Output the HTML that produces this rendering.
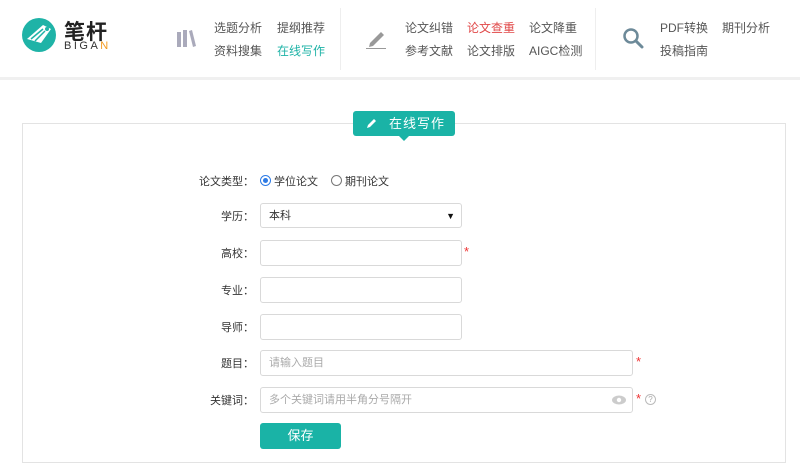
<!DOCTYPE html>
<html><head><meta charset="utf-8"><style>
*{margin:0;padding:0;box-sizing:border-box}
body{width:800px;height:451px;overflow:hidden;background:#fff;font-family:"Liberation Sans","Noto Sans CJK SC",sans-serif;font-size:12px;color:#333;position:relative}
.a{position:absolute}
.hd{position:absolute;left:0;top:0;width:800px;height:77px;background:#fff}
.band{position:absolute;left:0;top:77px;width:800px;height:3px;background:#f0f0f0}
.nav{position:absolute;font-size:12px;color:#555;white-space:nowrap}
.div{position:absolute;top:8px;width:1px;height:62px;background:#eee}
.card{position:absolute;left:22px;top:123px;width:764px;height:340px;border:1px solid #e3e3e3;background:#fff}
.lbl{position:absolute;width:90px;text-align:right;left:164px;font-size:11px;color:#333}
.in{position:absolute;left:260px;height:26px;border:1px solid #d9d9d9;border-radius:3px;background:#fff;font-size:11px;color:#aaa;padding-left:8px;line-height:24px}
.star{position:absolute;color:#e33;font-size:13px}
</style></head><body>
<div class="hd"></div>
<div class="band"></div>
<svg class="a" style="left:21px;top:17px" width="36" height="36" viewBox="0 0 36 36"><circle cx="18" cy="18" r="17" fill="#1fb3a7"/><path d="M6 22 L22 8 L30 12 L20 26 Z" fill="#fff"/><path d="M10 22 L22 12 M14 24 L24 14" stroke="#1fb3a7" stroke-width="1.5"/><circle cx="26" cy="12" r="2" fill="#1fb3a7"/></svg>
<div class="a" style="left:64px;top:16px;font-size:21px;font-weight:bold;color:#222;letter-spacing:1px">笔杆</div>
<div class="a" style="left:64px;top:40px;font-size:11px;letter-spacing:2.5px;color:#333">BIGA<span style="color:#f39a1e">N</span></div>
<svg class="a" style="left:176px;top:29px" width="20" height="18" viewBox="0 0 20 18"><rect x="1" y="3" width="4" height="15" fill="#aab"/><rect x="7" y="1" width="4" height="17" fill="#aab"/><path d="M13 2 L16 1 L20 17 L17 18 Z" fill="#aab"/></svg>
<div class="nav" style="left:214px;top:19px">选题分析</div>
<div class="nav" style="left:214px;top:42px">资料搜集</div>
<div class="nav" style="left:277px;top:19px">提纲推荐</div>
<div class="nav" style="left:277px;top:42px;color:#1fb3a7">在线写作</div>
<div class="div" style="left:340px"></div>
<svg class="a" style="left:366px;top:29px" width="20" height="20" viewBox="0 0 20 20"><path d="M4 14 L15 3 L18 6 L7 17 L3 18 Z" fill="#999"/><rect x="0" y="19" width="20" height="1.5" fill="#999"/></svg>
<div class="nav" style="left:405px;top:19px">论文纠错</div>
<div class="nav" style="left:405px;top:42px">参考文献</div>
<div class="nav" style="left:467px;top:19px;color:#e04848">论文查重</div>
<div class="nav" style="left:467px;top:42px">论文排版</div>
<div class="nav" style="left:529px;top:19px">论文降重</div>
<div class="nav" style="left:529px;top:42px">AIGC检测</div>
<div class="div" style="left:595px"></div>
<svg class="a" style="left:622px;top:27px" width="22" height="22" viewBox="0 0 22 22"><circle cx="9" cy="9" r="6.5" fill="none" stroke="#6d8a99" stroke-width="2.5"/><path d="M14 14 L20 20" stroke="#6d8a99" stroke-width="3" stroke-linecap="round"/></svg>
<div class="nav" style="left:660px;top:19px">PDF转换</div>
<div class="nav" style="left:660px;top:42px">投稿指南</div>
<div class="nav" style="left:722px;top:19px">期刊分析</div>
<div class="card"></div>
<div class="a" style="left:353px;top:111px;width:102px;height:25px;background:#1ab3a6;border-radius:3px;color:#fff;font-size:13px;line-height:25px;padding-left:36px;letter-spacing:1px">在线写作</div>
<svg class="a" style="left:366px;top:117px" width="12" height="12" viewBox="0 0 12 12"><path d="M1 11 L2 8 L8 2 L10 4 L4 10 Z" fill="#fff"/></svg>
<div class="a" style="left:399px;top:136px;width:0;height:0;border-left:5px solid transparent;border-right:5px solid transparent;border-top:5px solid #1ab3a6"></div>
<div class="lbl" style="top:173px">论文类型：</div>
<div class="a" style="left:260px;top:175px;width:11px;height:11px;border:1px solid #2d7be5;border-radius:50%"><div style="margin:2px;width:5px;height:5px;border-radius:50%;background:#2d7be5"></div></div>
<div class="a" style="left:274px;top:173px;font-size:11px">学位论文</div>
<div class="a" style="left:331px;top:175px;width:11px;height:11px;border:1px solid #777;border-radius:50%"></div>
<div class="a" style="left:345px;top:173px;font-size:11px">期刊论文</div>
<div class="lbl" style="top:208px">学历：</div>
<div class="in" style="top:203px;width:202px;height:25px;color:#333">本科<span style="position:absolute;right:6px;top:0;font-size:9px;color:#111">▼</span></div>
<div class="lbl" style="top:245px">高校：</div>
<div class="in" style="top:240px;width:202px"></div>
<div class="star" style="left:464px;top:244px">*</div>
<div class="lbl" style="top:282px">专业：</div>
<div class="in" style="top:277px;width:202px"></div>
<div class="lbl" style="top:319px">导师：</div>
<div class="in" style="top:314px;width:202px"></div>
<div class="lbl" style="top:355px">题目：</div>
<div class="in" style="top:350px;width:373px">请输入题目</div>
<div class="star" style="left:636px;top:354px">*</div>
<div class="lbl" style="top:392px">关键词：</div>
<div class="in" style="top:387px;width:373px">多个关键词请用半角分号隔开</div>
<svg class="a" style="left:612px;top:395px" width="14" height="10" viewBox="0 0 14 10"><ellipse cx="7" cy="5" rx="7" ry="4.5" fill="#ccc"/><circle cx="7" cy="5" r="2.2" fill="#fff"/></svg>
<div class="star" style="left:636px;top:391px">*</div>
<div class="a" style="left:645px;top:394px;width:11px;height:11px;border:1px solid #bbb;border-radius:50%;font-size:8px;color:#aaa;text-align:center;line-height:9px">?</div>
<div class="a" style="left:260px;top:423px;width:81px;height:26px;background:#1ab3a6;border-radius:3px;color:#fff;font-size:13px;text-align:center;line-height:26px">保存</div>
</body></html>
